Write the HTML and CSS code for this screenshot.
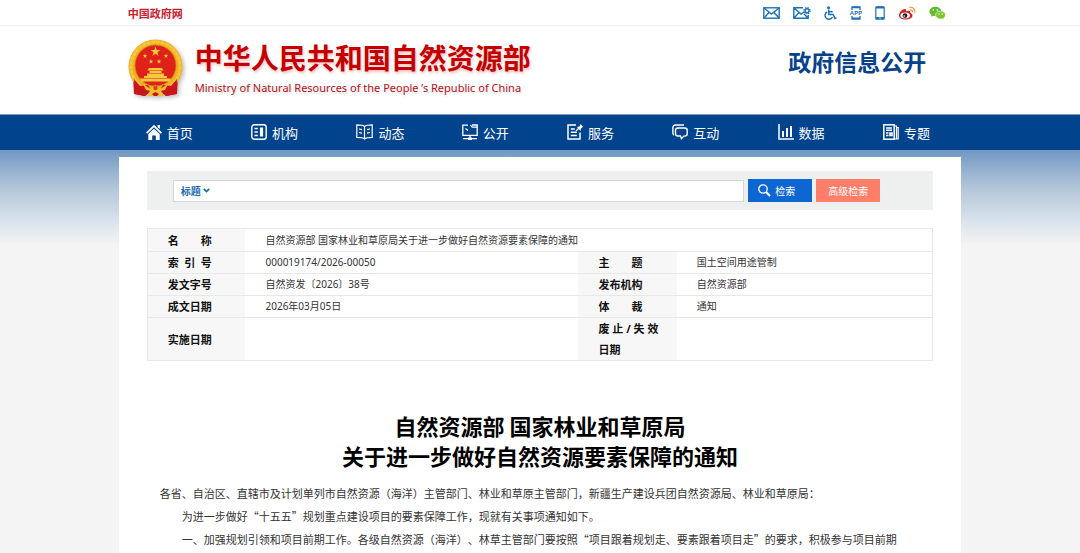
FILE: index.html
```html
<!DOCTYPE html>
<html lang="zh-CN">
<head>
<meta charset="utf-8">
<meta name="viewport" content="width=device-width, initial-scale=1">
<title>中华人民共和国自然资源部</title>
<link rel="stylesheet" href="styles.css">
</head>
<body>
<div class="topbar">
  <div class="wrap topbar-inner">
    <a class="gov-link" href="#">中国政府网</a>
    <div class="tools">
      <a href="#" aria-label="邮箱"><svg width="17" height="12" viewBox="0 0 17 12" fill="none" stroke="#1c70b8" stroke-width="1.4"><rect x=".8" y=".8" width="15.4" height="10.4"/><path d="M1 1l7.500 6L16 1M1 11l5-5.500M16 11l-5-5.500"/></svg></a>
      <a href="#" aria-label="邮件订阅"><svg width="18" height="12" viewBox="0 0 18 12" fill="none" stroke="#1c70b8" stroke-width="1.4"><path d="M10 .8H.8v10.400h14.400V8M1 1l7 6 3-2M1 11l5-5.500M15 11l-4-4"/><circle cx="14" cy="3.700" r="2"/><circle cx="14" cy="3.700" r="3.100" stroke-dasharray="1.4 1.040" stroke-width="1.2"/></svg></a>
      <a href="#" aria-label="无障碍"><svg width="13" height="14" viewBox="0 0 13 14" fill="none" stroke="#1c70b8" stroke-width="1.500"><circle cx="4.500" cy="1.700" r="1.500" fill="#1c70b8" stroke="none"/><path d="M4.700 3.500v5h4.500l1.800 4 1.500-.6M4.700 5.800h4M3 6a3.900 3.900 0 1 0 5.500 5" /></svg></a>
      <a href="#" aria-label="客户端"><svg width="12" height="14" viewBox="0 0 12 14" fill="none" stroke="#1c70b8"><path d="M2 4V.8h8V4M2 10v3.200h8V10" stroke-width="1.300"/><path d="M2 1.500h8M2 12.300h8" stroke-width="1.600"/><text x="6" y="9.300" text-anchor="middle" class="app-text">APP</text></svg></a>
      <a href="#" aria-label="手机版"><svg width="10" height="14" viewBox="0 0 10 14" fill="none" stroke="#1c70b8"><rect x=".8" y=".8" width="8.400" height="12.400" rx=".7" stroke-width="1.200"/><path d="M1 1.500h8M1 12h8" stroke-width="1.800"/><path d="M4.300 12h1.400" stroke="#fff"/></svg></a>
      <a href="#" aria-label="微博"><svg width="18" height="14" viewBox="0 0 18 14"><path d="M1 9.500C1 6 5.500 2 7.600 3.200c.8.500.6 1.300.4 2 2-.8 4.500-1 4.300 1.200 0 .7 2.200 1 2.200 3 0 2.500-3.500 4.100-7 4.100S1 12 1 9.500z" fill="#d7212b"/><ellipse cx="7.200" cy="9.500" rx="4.700" ry="3" fill="#fff"/><circle cx="7" cy="9.600" r="2.400" fill="#222"/><circle cx="6.300" cy="10" r=".8" fill="#fff"/><path d="M11.300 1.400c3.500-.8 6.300 2 5.300 5.500M12 3.900c1.800-.3 2.800 1 2.400 2.500" fill="none" stroke="#f2992c" stroke-width="1.200"/></svg></a>
      <a href="#" aria-label="微信"><svg width="17" height="14" viewBox="0 0 17 14"><path d="M6.300.8C3 .8.400 2.900.400 5.500c0 1.500.8 2.700 2.100 3.600L2 10.700l2-.9c3 .8 8-.9 8.200-4.300C12.200 2.900 9.600.8 6.300.8z" fill="#66b82e"/><path d="M11.600 5c-2.800 0-5 1.800-5 4s2.200 4 5 4c.7 0 1.300-.1 1.900-.3l1.700.8-.4-1.500c1-.7 1.700-1.800 1.700-3 0-2.200-2.200-4-4.900-4z" fill="#7cc62d" stroke="#fff" stroke-width=".6"/><g fill="#fff"><circle cx="4.300" cy="4" r=".8"/><circle cx="8.200" cy="4" r=".8"/><circle cx="10" cy="8" r=".7"/><circle cx="13.200" cy="8" r=".7"/></g></svg></a>
    </div>
  </div>
</div>

<header class="wrap masthead">
  <a class="brand" href="#">
    <svg class="emblem" width="56" height="60" viewBox="0 0 56 60" aria-hidden="true">
      <path d="M5 38l1 17 11 2 5-4h11l5 4 11-2 1-17z" fill="#c9151b"/>
      <circle cx="27.500" cy="27.500" r="27" fill="#eeb022"/>
      <circle cx="27.500" cy="27.500" r="24.500" fill="none" stroke="#f6c63c" stroke-width="3" stroke-dasharray="4 .6"/>
      <circle cx="27.500" cy="26.500" r="20.500" fill="#df2119" stroke="#c98512" stroke-width=".8"/>
      <g fill="#f8c93e">
        <path d="M27.500 7.500l1.200 3.600h3.800l-3.100 2.200 1.200 3.700-3.100-2.300-3.100 2.300 1.200-3.700-3.100-2.200h3.800z"/>
        <path id="small-star" d="M17 14.500l.6 1.700h1.800l-1.500 1 .6 1.800-1.500-1.100-1.500 1.100.6-1.800-1.500-1h1.800z"/>
        <use href="#small-star" x="21"/><use href="#small-star" x="6" y="5.500"/><use href="#small-star" x="14" y="5.500"/>
        <path d="M21 29h13l1.500 2.500h-16zM21.500 32h12v2h-12zM19 34.500h17V37h3v2H16v-2h3zM12 39.500h31l-1.500 3h-28z"/>
      </g>
      <path d="M6 40l6 7 8-1 3 5-6 6-10-2zM49 40l-6 7-8-1-3 5 6 6 10-2z" fill="#c9151b"/>
      <path d="M15 45l8 5 4.500-4 4.500 4 8-5-3 6-5 1 4 5h-17l4-5-5-1z" fill="#f2bf2f"/>
      <circle cx="27.500" cy="49" r="2.200" fill="#d5451a"/>
      <path d="M24 55l3.500-2 3.500 2-2 2h-3z" fill="#c9151b"/>
    </svg>
    <span class="brand-text">
      <span class="brand-name">中华人民共和国自然资源部</span>
      <span class="brand-en">Ministry of Natural Resources of the People ’s Republic of China</span>
    </span>
  </a>
  <div class="section-name">政府信息公开</div>
</header>

<nav class="nav" aria-label="主导航">
  <div class="wrap nav-inner">
    <a href="#"><svg width="16" height="16" viewBox="0 0 16 16"><path d="M0 8.500L8 .7l8 7.800-1.200 1.200L8 3.300 1.200 9.700z" fill="#fff"/><path d="M2.300 10L8 4.700l5.700 5.300v6H9.800v-4.500H6.200V16H2.300zM11.500 1h2.400v4l-2.400-2z" fill="#fff"/></svg>首页</a>
    <a href="#"><svg width="16" height="16" viewBox="0 0 16 16" fill="none" stroke="#fff" stroke-width="1.400"><rect x=".8" y=".8" width="14.400" height="14.400" rx="2.500"/><path d="M3.500 4.500h3.300M3.500 8h3.300M3.500 11.500h3.300" stroke-width="1.600"/><path d="M10.500 3.500v9" stroke-width="3.200"/></svg>机构</a>
    <a href="#"><svg width="17" height="16" viewBox="0 0 17 16" fill="none" stroke="#fff" stroke-width="1.200"><path d="M8.500 2.500C7 1 5 .9.800.9v12.500c4 0 6 .1 7.700 1.600 1.700-1.500 3.700-1.600 7.700-1.600V.9C12 .9 10 1 8.500 2.500zM8.500 2.500V15M3 5l3 .7M3 8.500l3 .7M14 5l-3 .7M14 8.500l-3 .7"/></svg>动态</a>
    <a href="#"><svg width="16" height="16" viewBox="0 0 16 16" fill="none" stroke="#fff" stroke-width="1.300"><path d="M6 1.200H.8v10.100h14.400V3.200h-5L8.500 1.200M10 1h5.200v2M3.500 4.500l2.500 2M8 11.500V14M1 14.600h5M10 14.600h5"/><path d="M6 13.500h4V16H6z" fill="#fff" stroke="none"/></svg>公开</a>
    <a href="#"><svg width="16" height="16" viewBox="0 0 16 16" fill="none" stroke="#fff" stroke-width="1.500"><path d="M9 1H1v14h12V8.500M3.800 5h4M3.800 8.300h6M3.800 11.500h6"/><path d="M9 7l3-3" stroke-width="1.300"/><path d="M10 3l2.500-.5L13.500 0 16 2.800l-2 1.700-.5 2.500z" fill="#fff" stroke="none"/></svg>服务</a>
    <a href="#"><svg width="16" height="16" viewBox="0 0 16 16" fill="none" stroke="#fff" stroke-width="1.400"><path d="M12 1H3.500C2 1 .9 2 .9 3.500V9c0 1 .5 1.700 1.100 2"/><path d="M6 4h6.700c1.400 0 2.500 1 2.500 2.300v3.500c0 1.300-1.100 2.300-2.500 2.300h-.9L9.500 14.700 8.400 12H6c-1.400 0-2.500-1-2.500-2.300V6.300C3.500 5 4.600 4 6 4z"/></svg>互动</a>
    <a href="#"><svg width="16" height="16" viewBox="0 0 16 16" fill="none" stroke="#fff"><path d="M1 0v15h15" stroke-width="1.500"/><path d="M5 13V7M9 13V4M13 13V2" stroke-width="2"/></svg>数据</a>
    <a href="#"><svg width="16" height="16" viewBox="0 0 16 16" fill="none" stroke="#fff" stroke-width="1.500"><rect x=".8" y=".8" width="10.400" height="14.400"/><path d="M3 4h6M3 6.300h6M3 9h2.500M3 11.500h2.500M7 9h2v2.500H7z"/><path d="M12 2h1.500v13H11M14 3.500h1.200V15H13" stroke-width="1.200"/></svg>专题</a>
  </div>
</nav>

<div class="backdrop">
<main class="wrap sheet">
  <form class="search" role="search" onsubmit="return false">
    <div class="search-box">
      <select class="search-field" aria-label="检索字段"><option>标题</option><option>正文</option></select>
      <svg class="chevron" width="7" height="5" viewBox="0 0 7 5" fill="none" stroke="#1c6bb0" stroke-width="1.500" aria-hidden="true"><path d="M.7.900l2.800 2.700L6.300.900"/></svg>
      <input class="search-input" type="text" aria-label="检索内容">
    </div>
    <button class="btn btn-search" type="submit"><svg width="13" height="13" viewBox="0 0 13 13" fill="none" stroke="#fff" aria-hidden="true"><circle cx="5" cy="5" r="4.200" stroke-width="1.300"/><path d="M8.300 8.300l3.700 3.700" stroke-width="2.200"/></svg>检索</button>
    <button class="btn btn-alt" type="button">高级检索</button>
  </form>

  <table class="meta">
    <colgroup><col class="col-label"><col class="col-wide"><col class="col-label"><col></colgroup>
    <tr><th scope="row"><span class="spread">名<span>称</span></span></th><td colspan="3">自然资源部 国家林业和草原局关于进一步做好自然资源要素保障的通知</td></tr>
    <tr><th scope="row"><span class="spread">索<span>引</span><span>号</span></span></th><td>000019174/2026-00050</td><th scope="row"><span class="spread">主<span>题</span></span></th><td>国土空间用途管制</td></tr>
    <tr><th scope="row">发文字号</th><td>自然资发〔2026〕38号</td><th scope="row">发布机构</th><td>自然资源部</td></tr>
    <tr><th scope="row">成文日期</th><td>2026年03月05日</td><th scope="row"><span class="spread">体<span>裁</span></span></th><td>通知</td></tr>
    <tr><th scope="row">实施日期</th><td></td><th scope="row">废 止 / 失 效<br>日期</th><td></td></tr>
  </table>

  <article class="article">
    <h1>自然资源部 国家林业和草原局<br>关于进一步做好自然资源要素保障的通知</h1>
    <p class="address">各省、自治区、直辖市及计划单列市自然资源（海洋）主管部门、林业和草原主管部门，新疆生产建设兵团自然资源局、林业和草原局：</p>
    <p>为进一步做好“十五五”规划重点建设项目的要素保障工作，现就有关事项通知如下。</p>
    <p>一、加强规划引领和项目前期工作。各级自然资源（海洋）、林草主管部门要按照“项目跟着规划走、要素跟着项目走”的要求，积极参与项目前期</p>
  </article>
</main>
</div>
</body>
</html>
```
FILE: styles.css
```css
* { box-sizing: border-box; }

body {
  margin: 0;
  background: #fff;
  color: #333;
  font-family: "Noto Sans", "Noto Sans CJK SC", sans-serif;
  font-size: 10px;
}

a { color: inherit; text-decoration: none; }

.wrap { margin: 0 11%; }

.topbar { border-bottom: 1px solid #f3f3f3; }
.topbar-inner {
  display: flex;
  justify-content: space-between;
  align-items: center;
  height: 25px;
  padding: 0 15px 0 9px;
}
.gov-link { color: #c8202c; font-size: 11px; font-weight: 700; }
.tools { display: flex; align-items: center; gap: 13px; }
.tools a, .tools svg { display: block; }
.app-text { fill: #1c70b8; stroke: none; font: 700 6px "Liberation Sans", sans-serif; }

.masthead {
  display: flex;
  justify-content: space-between;
  align-items: flex-start;
  padding: 12px 35px 14px 9px;
}
.brand { display: flex; align-items: center; gap: 11px; }
.emblem { filter: drop-shadow(2px 2px 2px rgba(0, 0, 0, .25)); }
.brand-text { display: flex; flex-direction: column; padding-bottom: 2px; }
.brand-name {
  color: #c40000;
  font-size: 28px;
  font-weight: 700;
  line-height: 40px;
  text-shadow: 1px 2px 3px rgba(200, 0, 0, .25);
}
.brand-en {
  color: #b01217;
  font-size: 11px;
  line-height: 20px;
  text-shadow: 1px 2px 2px rgba(150, 0, 0, .15);
}
.section-name { color: #06418a; font-size: 23px; font-weight: 700; line-height: 48px; }

.nav { background: #02438d; border-top: 1px solid #7d9fc6; color: #fff; }
.nav-inner { display: grid; grid-template-columns: repeat(8, 1fr); }
.nav-inner a {
  display: flex;
  align-items: center;
  gap: 5px;
  height: 35px;
  padding: 0 0 1px 27px;
  font-size: 13px;
}

.backdrop {
  padding-top: 7px;
  background: #f3f4f3 linear-gradient(#7096c2 0, #8eacce 16px, #b3c6da 38px, #dce5ed 74px, #f3f4f3 94px) no-repeat 0 0 / 100% 94px;
}
.sheet { padding: 14px 28px 4px; background: #fff; }

.search {
  display: flex;
  align-items: center;
  gap: 4px;
  padding: 8px 53px 8px 26px;
  background: #eef0f0;
}
.search-box {
  display: flex;
  flex: 1;
  align-items: center;
  height: 22px;
  border: 1px solid #d6d6d6;
  background: #fff;
}
.search-field {
  appearance: none;
  border: 0;
  padding: 0 1px 0 7px;
  background: none;
  color: #1c6bb0;
  font: 700 10px "Noto Sans CJK SC", sans-serif;
}
.chevron { margin-left: 1px; }
.search-input {
  flex: 1;
  min-width: 0;
  height: 20px;
  margin-left: 4px;
  border: 0;
  background: none;
  font: inherit;
}
.btn {
  display: flex;
  align-items: center;
  justify-content: center;
  gap: 4px;
  width: 64px;
  height: 23px;
  padding: 0;
  border: 0;
  background: #0e66d3;
  color: #fff;
  font: 10px "Noto Sans CJK SC", sans-serif;
}
.btn-search { justify-content: flex-start; padding-left: 10px; }
.btn-alt { background: #fe7e69; }

.meta {
  width: 100%;
  margin-top: 18px;
  border-collapse: collapse;
  table-layout: fixed;
}
.col-label { width: 12.5%; }
.col-wide { width: 42.4%; }
.meta tr { border: 1px solid #e8e8e5; }
.meta th, .meta td { height: 22px; padding: 0 0 0 20px; text-align: left; line-height: 21px; }
.meta tr:first-child > * { height: 23px; }
.meta th { background: #f7f7f7; color: #111; font-size: 11px; }
.meta td { font-weight: 400; }
.meta .spread { display: flex; justify-content: space-between; width: 44px; }

.article {
  margin-top: 49px;
  padding: 0 13px;
  font-family: "Noto Sans CJK SC", sans-serif;
  text-spacing-trim: space-all;
}
.article h1 {
  margin: 0 0 12px;
  color: #000;
  font-size: 22px;
  line-height: 30px;
  text-align: center;
}
.article p { margin: 0; font-size: 11px; line-height: 23px; text-indent: 2em; }
.article .address { text-indent: 0; }
```
